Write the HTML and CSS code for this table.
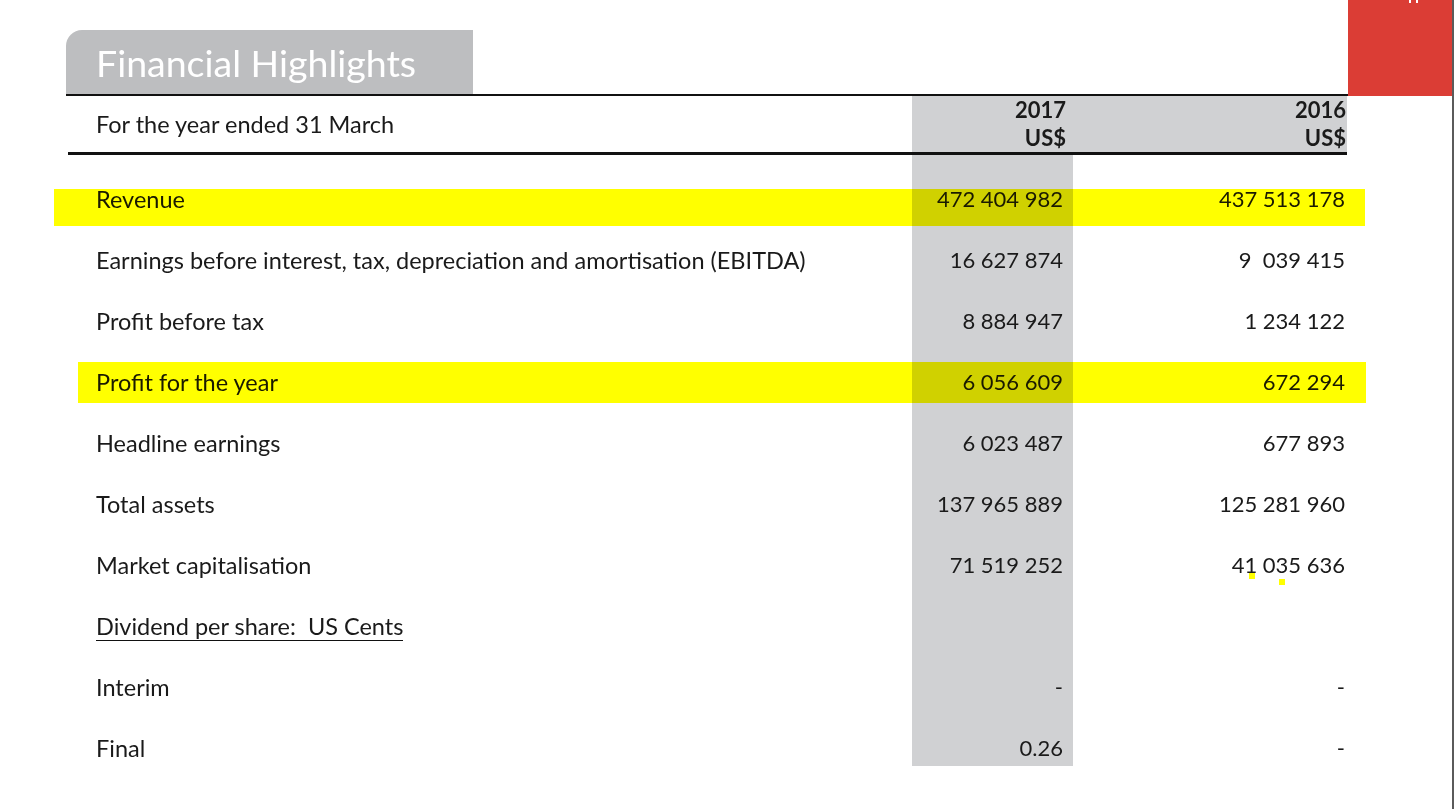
FILE: index.html
```html
<!DOCTYPE html>
<html lang="en">
<head>
<meta charset="utf-8">
<title>Financial Highlights</title>
<link rel="stylesheet" href="styles.css">
</head>
<body>
<div class="frame">
  <div class="page">
    <div class="top">
      <div class="top-left">
        <div class="tab">Financial Highlights</div>
      </div>
      <div class="red"><span class="mark"></span><span class="mark"></span></div>
    </div>

    <div class="thead">
      <div class="th-label">For the year ended 31 March</div>
      <div class="th-col c17">2017<br>US$</div>
      <div class="th-col c16">2016<br>US$</div>
    </div>

    <div class="tbody">
      <div class="row hl-revenue">
        <div class="label">Revenue</div>
        <div class="v c17">472 404 982</div>
        <div class="v c16">437 513 178</div>
      </div>
      <div class="row">
        <div class="label">Earnings before interest, tax, depreciation and amortisation (EBITDA)</div>
        <div class="v c17">16 627 874</div>
        <div class="v c16">9&nbsp; 039 415</div>
      </div>
      <div class="row">
        <div class="label">Profit before tax</div>
        <div class="v c17">8 884 947</div>
        <div class="v c16">1 234 122</div>
      </div>
      <div class="row hl-profit">
        <div class="label">Profit for the year</div>
        <div class="v c17">6 056 609</div>
        <div class="v c16">672 294</div>
      </div>
      <div class="row">
        <div class="label">Headline earnings</div>
        <div class="v c17">6 023 487</div>
        <div class="v c16">677 893</div>
      </div>
      <div class="row">
        <div class="label">Total assets</div>
        <div class="v c17">137 965 889</div>
        <div class="v c16">125 281 960</div>
      </div>
      <div class="row">
        <div class="label">Market capitalisation</div>
        <div class="v c17">71 519 252</div>
        <div class="v c16">41 035 636</div>
        <span class="dot dot-a"></span>
        <span class="dot dot-b"></span>
      </div>
      <div class="row">
        <div class="label"><span class="ul">Dividend per share:&nbsp; US Cents</span></div>
        <div class="v c17"></div>
        <div class="v c16"></div>
      </div>
      <div class="row">
        <div class="label">Interim</div>
        <div class="v c17">-</div>
        <div class="v c16">-</div>
      </div>
      <div class="row last">
        <div class="label">Final</div>
        <div class="v c17">0.26</div>
        <div class="v c16">-</div>
      </div>
    </div>
  </div>
</div>
</body>
</html>
```

FILE: styles.css
```css
* { box-sizing: border-box; }

html, body {
  margin: 0;
  padding: 0;
  background: #ffffff;
}

body {
  font-family: Lato, "Open Sans", "Liberation Sans", sans-serif;
  color: #1a1a1a;
  overflow: hidden;
}

.frame {
  width: 1456px;
  height: 809px;
  display: flex;
}

.page {
  width: 1454px;
  height: 809px;
  border-right: 2px solid #5b5b5b;
}

/* ---------- top bar ---------- */
.top {
  display: flex;
  height: 96px;
  padding-left: 66px;
}

.top-left {
  flex: 1;
  display: flex;
  flex-direction: column;
  justify-content: flex-end;
  border-bottom: 2px solid #111;
}

.tab {
  width: 407px;
  height: 64px;
  background: #bdbec0;
  border-top-left-radius: 16px;
  color: #ffffff;
  font-size: 37.5px;
  line-height: 66px;
  padding-left: 30px;
  white-space: nowrap;
}

.red {
  width: 104px;
  height: 96px;
  background: #db3d35;
  display: flex;
  gap: 5px;
  padding-left: 61px;
  align-items: flex-start;
}

.mark {
  width: 2px;
  height: 3px;
  background: #ffffff;
}

/* ---------- header ---------- */
.thead {
  display: flex;
  margin-left: 68px;
  width: 1279px;
  height: 59px;
  border-bottom: 3px solid #111;
}

.th-label {
  width: 844px;
  padding-left: 28px;
  font-size: 23.5px;
  line-height: 56px;
}

.th-col {
  background: #d0d1d3;
  font-weight: 700;
  font-size: 22px;
  line-height: 28px;
  text-align: right;
}

.thead .c17 {
  width: 161px;
  padding-right: 7px;
}

.thead .c16 {
  width: 274px;
  padding-right: 1px;
}

/* ---------- body ---------- */
.tbody {
  padding-top: 14px;
  background: linear-gradient(to right,
    transparent 912px,
    #d0d1d3 912px,
    #d0d1d3 1073px,
    transparent 1073px);
  height: 611px;
}

.row {
  position: relative;
  display: flex;
  height: 61px;
  font-size: 22px;
  line-height: 28px;
}

.row.last {
  height: 48px;
}

.label {
  width: 912px;
  padding-left: 96px;
  padding-top: 16px;
  font-size: 23.5px;
  white-space: nowrap;
}

.v {
  padding-top: 16px;
  text-align: right;
}

.row .c17 {
  width: 161px;
  padding-right: 10px;
}

.row .c16 {
  width: 274px;
  padding-right: 2px;
}

.ul {
  display: inline-block;
  border-bottom: 1px solid #111;
  line-height: 27px;
}

/* highlighter marks laid over the rows */
.hl-revenue::before,
.hl-profit::before {
  content: "";
  position: absolute;
  background: #ffff00;
  mix-blend-mode: multiply;
  pointer-events: none;
}

.hl-revenue::before {
  left: 54px;
  width: 1311px;
  top: 20px;
  height: 37px;
}

.hl-profit::before {
  left: 78px;
  width: 1288px;
  top: 10px;
  height: 41px;
}

.dot {
  position: absolute;
  width: 6px;
  height: 6px;
  background: #ffff00;
}

.dot-a {
  left: 1249px;
  top: 38px;
}

.dot-b {
  left: 1279px;
  top: 44px;
}
```
